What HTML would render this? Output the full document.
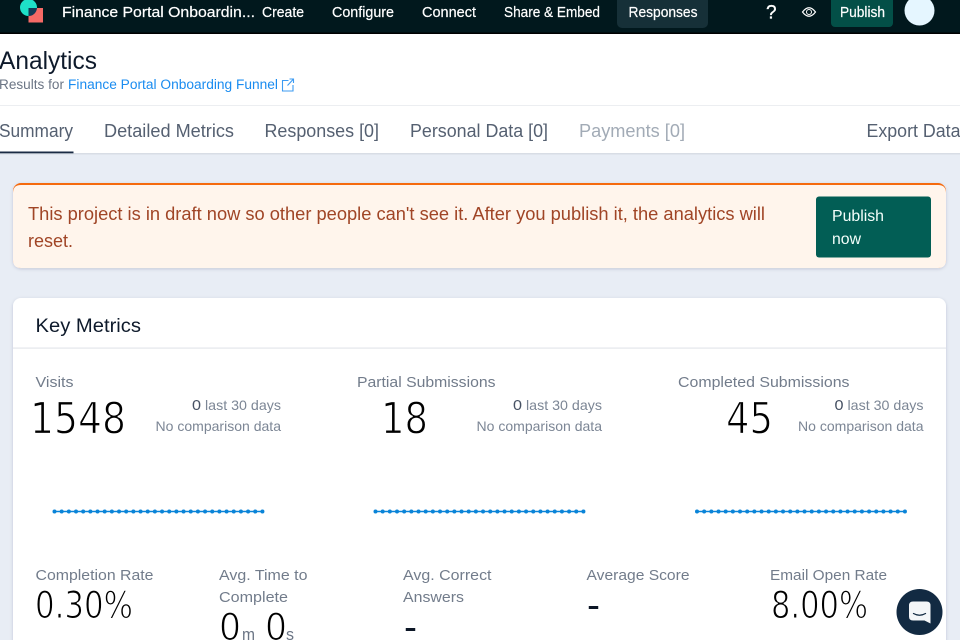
<!DOCTYPE html>
<html><head><meta charset="utf-8"><title>Analytics</title>
<style>
html,body{margin:0;padding:0;width:960px;height:640px;overflow:hidden;background:#e8edf5}
svg{display:block}
text{font-family:"Liberation Sans",sans-serif}
.n{font-size:14.5px;fill:#fff;stroke:#fff;stroke-width:.2px}
.l{font-size:15px;fill:#727c8b}
.t{font-size:18px;fill:#556071}
.s{font-size:14px;fill:#7c8695}
.z{font-size:15px;fill:#465163}
.b{font-family:"DejaVu Sans",sans-serif;font-size:44px;fill:#000;stroke:#fff;stroke-width:1.2px}
.m{font-family:"DejaVu Sans",sans-serif;font-size:37px;fill:#000;stroke:#fff;stroke-width:1.1px}
.a{font-size:18px;fill:#a04526}
</style></head><body>
<svg width="960" height="640" viewBox="0 0 960 640" xmlns="http://www.w3.org/2000/svg">
<defs><filter id="sh" x="-5%" y="-10%" width="110%" height="125%"><feDropShadow dx="0" dy="1" stdDeviation="1.5" flood-color="#1a2b44" flood-opacity=".18"/></filter></defs>
<rect width="960" height="640" fill="#e8edf5"/>
<rect width="960" height="34" fill="#01181d"/><rect y="32.5" width="960" height="1.5" fill="#000"/>
<circle cx="28.5" cy="7.5" r="8.5" fill="#1ee0c8"/>
<rect x="28.5" y="8" width="14.5" height="14.5" fill="#f56a66"/>
<path d="M28.5 8H37A8.5 8.5 0 0 1 28.5 16Z" fill="#123a55"/>
<text class="n" x="62" y="17" textLength="193" lengthAdjust="spacingAndGlyphs">Finance Portal Onboardin...</text>
<text class="n" x="262" y="17" textLength="42" lengthAdjust="spacingAndGlyphs">Create</text>
<text class="n" x="332" y="17" textLength="62" lengthAdjust="spacingAndGlyphs">Configure</text>
<text class="n" x="422" y="17" textLength="54" lengthAdjust="spacingAndGlyphs">Connect</text>
<text class="n" x="504" y="17" textLength="96" lengthAdjust="spacingAndGlyphs">Share &amp; Embed</text>
<rect x="617" y="-6" width="91" height="34" rx="5" fill="#163038"/>
<text class="n" x="628.500" y="17" textLength="69" lengthAdjust="spacingAndGlyphs">Responses</text>
<text x="766" y="18.500" font-size="19" fill="#fff" stroke="#fff" stroke-width=".35">?</text>
<path d="M802.500 12Q809 3.500 815.500 12Q809 20.500 802.500 12Z" fill="none" stroke="#fff" stroke-width="1.200"/>
<circle cx="809" cy="12" r="2.500" fill="none" stroke="#fff" stroke-width="1"/>
<rect x="831" y="-6" width="62" height="33" rx="4" fill="#034f47"/>
<text class="n" x="840" y="17" textLength="45" lengthAdjust="spacingAndGlyphs">Publish</text>
<circle cx="919.500" cy="10.500" r="15" fill="#e5f6ff"/>

<rect y="34" width="960" height="119" fill="#fff"/>
<rect y="105" width="960" height="1" fill="#eceef1"/>
<rect y="153" width="960" height="1.500" fill="#d8dde5"/>
<text x="-1" y="69" font-size="25" fill="#0e1a2b" textLength="98" lengthAdjust="spacingAndGlyphs">Analytics</text>
<text x="-1" y="89" font-size="13.500" fill="#6b7585" textLength="65" lengthAdjust="spacingAndGlyphs">Results for</text>
<text x="68" y="89" font-size="13.500" fill="#1a8cf0" textLength="210" lengthAdjust="spacingAndGlyphs">Finance Portal Onboarding Funnel</text>
<path d="M288.500 80.500H282.500V91H293V85M287.500 85.500L293.500 79M289.500 79H293.500V83" fill="none" stroke="#3d9bf2" stroke-width="1.100"/>
<text class="t" x="-1" y="137" textLength="74" lengthAdjust="spacingAndGlyphs">Summary</text>
<rect y="151.500" width="73.500" height="1.800" fill="#1a2b44"/>
<text class="t" x="104" y="137" textLength="130" lengthAdjust="spacingAndGlyphs">Detailed Metrics</text>
<text class="t" x="264.500" y="137" textLength="114.500" lengthAdjust="spacingAndGlyphs">Responses [0]</text>
<text class="t" x="410" y="137" textLength="138" lengthAdjust="spacingAndGlyphs">Personal Data [0]</text>
<text class="t" style="fill:#a2abb6" x="579" y="137" textLength="106" lengthAdjust="spacingAndGlyphs">Payments [0]</text>
<text class="t" x="866.500" y="137" textLength="94" lengthAdjust="spacingAndGlyphs">Export Data</text>

<rect x="13" y="183" width="933" height="85" rx="8" fill="#f56a10" filter="url(#sh)"/>
<path d="M13 193Q13 185 21 185H938Q946 185 946 193V260Q946 268 938 268H21Q13 268 13 260Z" fill="#fff5ec"/>
<text class="a" x="28" y="220" textLength="737" lengthAdjust="spacingAndGlyphs">This project is in draft now so other people can't see it. After you publish it, the analytics will</text>
<text class="a" x="28" y="247" textLength="45" lengthAdjust="spacingAndGlyphs">reset.</text>
<rect x="816" y="196.500" width="115" height="61" rx="3" fill="#025e55"/>
<text x="832" y="221" font-size="16" fill="#f4fffb" textLength="52" lengthAdjust="spacingAndGlyphs">Publish</text>
<text x="832" y="244" font-size="16" fill="#f4fffb" textLength="29" lengthAdjust="spacingAndGlyphs">now</text>

<rect x="13" y="298" width="933" height="360" rx="8" fill="#fff" filter="url(#sh)"/>
<text x="35.500" y="332" font-size="19.500" fill="#0e1a2b" textLength="105.500" lengthAdjust="spacingAndGlyphs">Key Metrics</text>
<rect x="13" y="347.500" width="933" height="1.200" fill="#e3e6eb"/>

<text class="l" x="35.500" y="387" textLength="38" lengthAdjust="spacingAndGlyphs">Visits</text>
<text class="l" x="357" y="387" textLength="138.500" lengthAdjust="spacingAndGlyphs">Partial Submissions</text>
<text class="l" x="678" y="387" textLength="171.500" lengthAdjust="spacingAndGlyphs">Completed Submissions</text>
<text class="b" x="30" y="433.500" textLength="96" lengthAdjust="spacingAndGlyphs">1548</text>
<text class="b" x="381" y="433.500" textLength="47" lengthAdjust="spacingAndGlyphs">18</text>
<text class="b" x="726" y="433.500" textLength="47" lengthAdjust="spacingAndGlyphs">45</text>

<text class="z" x="192" y="410" textLength="9" lengthAdjust="spacingAndGlyphs">0</text>
<text class="s" x="205" y="410" textLength="76" lengthAdjust="spacingAndGlyphs">last 30 days</text>
<text class="s" x="155.500" y="431" textLength="125.500" lengthAdjust="spacingAndGlyphs">No comparison data</text>
<text class="z" x="513" y="410" textLength="9" lengthAdjust="spacingAndGlyphs">0</text>
<text class="s" x="526" y="410" textLength="76" lengthAdjust="spacingAndGlyphs">last 30 days</text>
<text class="s" x="476.500" y="431" textLength="125.500" lengthAdjust="spacingAndGlyphs">No comparison data</text>
<text class="z" x="834.500" y="410" textLength="9" lengthAdjust="spacingAndGlyphs">0</text>
<text class="s" x="847.500" y="410" textLength="76" lengthAdjust="spacingAndGlyphs">last 30 days</text>
<text class="s" x="798" y="431" textLength="125.500" lengthAdjust="spacingAndGlyphs">No comparison data</text>

<g fill="none" stroke="#0a84d8">
<path d="M54.500 511.500H262" stroke-width="1.600"/><path d="M54.500 511.500H263" stroke-width="4" stroke-linecap="round" stroke-dasharray="0 7.170"/>
<path d="M375.500 511.500H583" stroke-width="1.600"/><path d="M375.500 511.500H584" stroke-width="4" stroke-linecap="round" stroke-dasharray="0 7.170"/>
<path d="M697 511.500H904.500" stroke-width="1.600"/><path d="M697 511.500H905.500" stroke-width="4" stroke-linecap="round" stroke-dasharray="0 7.170"/>
</g>

<text class="l" x="35.500" y="580" textLength="118" lengthAdjust="spacingAndGlyphs">Completion Rate</text>
<text class="m" x="35" y="618" textLength="98" lengthAdjust="spacingAndGlyphs">0.30%</text>
<text class="l" x="219" y="580" textLength="88.500" lengthAdjust="spacingAndGlyphs">Avg. Time to</text>
<text class="l" x="219" y="602" textLength="69" lengthAdjust="spacingAndGlyphs">Complete</text>
<text class="m" x="219" y="640" textLength="22" lengthAdjust="spacingAndGlyphs">0</text>
<text x="242" y="640" font-size="17" fill="#6b7585" textLength="13" lengthAdjust="spacingAndGlyphs">m</text>
<text class="m" x="265" y="640" textLength="22" lengthAdjust="spacingAndGlyphs">0</text>
<text x="286" y="640" font-size="17" fill="#6b7585" textLength="8" lengthAdjust="spacingAndGlyphs">s</text>
<text class="l" x="403" y="580" textLength="88.500" lengthAdjust="spacingAndGlyphs">Avg. Correct</text>
<text class="l" x="403" y="602" textLength="61" lengthAdjust="spacingAndGlyphs">Answers</text>
<text class="m" style="stroke:none;fill:#0c1626" x="404" y="640" textLength="13" lengthAdjust="spacingAndGlyphs">-</text>
<text class="l" x="586.500" y="580" textLength="103" lengthAdjust="spacingAndGlyphs">Average Score</text>
<text class="m" style="stroke:none;fill:#0c1626" x="587" y="618" textLength="13" lengthAdjust="spacingAndGlyphs">-</text>
<text class="l" x="770" y="580" textLength="117" lengthAdjust="spacingAndGlyphs">Email Open Rate</text>
<text class="m" x="771" y="618" textLength="97" lengthAdjust="spacingAndGlyphs">8.00%</text>

<circle cx="919.500" cy="612" r="23" fill="#122a42"/>
<path d="M913 601.500H926.500Q930.500 601.500 930.500 605.500V623.500L924.500 620.500H913Q909 620.500 909 616.500V605.500Q909 601.500 913 601.500Z" fill="#f4f6f8"/>
<path d="M913.500 613.500Q919.500 617 925.500 613.500" fill="none" stroke="#122a42" stroke-width="1.300" stroke-linecap="round"/>
</svg>
</body></html>
